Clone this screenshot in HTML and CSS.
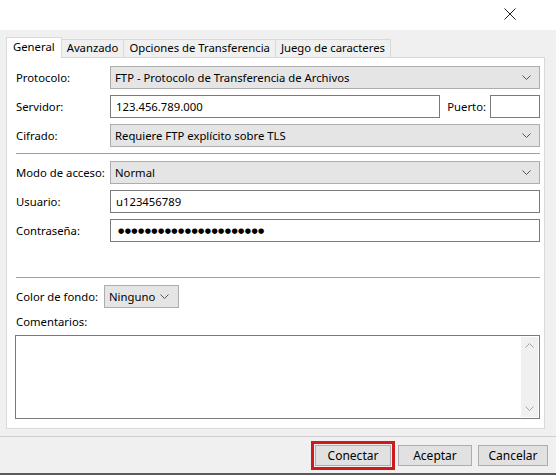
FILE: index.html
```html
<!DOCTYPE html>
<html lang="es">
<head>
<meta charset="utf-8">
<title>Gestor de sitios</title>
<link rel="stylesheet" href="styles.css">
</head>
<body>
<div class="titlebar">
  <svg class="close" width="12" height="12" viewBox="0 0 12 12"><path d="M0.5 0.5L11.5 11.5M11.5 0.5L0.5 11.5" stroke="#222" stroke-width="1" fill="none"/></svg>
</div>
<div class="dialog">
  <div class="tabs">
    <div class="tab active">General</div>
    <div class="tab">Avanzado</div>
    <div class="tab">Opciones de Transferencia</div>
    <div class="tab">Juego de caracteres</div>
  </div>
  <div class="panel">
    <div class="row">
      <span class="label">Protocolo:</span>
      <div class="select grow"><span>FTP - Protocolo de Transferencia de Archivos</span><svg class="chev" width="9" height="5" viewBox="0 0 9 5"><path d="M0.5 0.5L4.5 4.5L8.5 0.5" stroke="#555" fill="none"/></svg></div>
    </div>
    <div class="row">
      <span class="label">Servidor:</span>
      <div class="input server">123.456.789.000</div>
      <span class="port-label">Puerto:</span>
      <div class="input port"></div>
    </div>
    <div class="row">
      <span class="label">Cifrado:</span>
      <div class="select grow"><span>Requiere FTP explícito sobre TLS</span><svg class="chev" width="9" height="5" viewBox="0 0 9 5"><path d="M0.5 0.5L4.5 4.5L8.5 0.5" stroke="#555" fill="none"/></svg></div>
    </div>
    <div class="sep"></div>
    <div class="row">
      <span class="label">Modo de acceso:</span>
      <div class="select grow"><span>Normal</span><svg class="chev" width="9" height="5" viewBox="0 0 9 5"><path d="M0.5 0.5L4.5 4.5L8.5 0.5" stroke="#555" fill="none"/></svg></div>
    </div>
    <div class="row">
      <span class="label">Usuario:</span>
      <div class="input grow">u123456789</div>
    </div>
    <div class="row">
      <span class="label">Contraseña:</span>
      <div class="input grow"><span class="dots">●●●●●●●●●●●●●●●●●●●●●●</span></div>
    </div>
    <div class="sep sep2"></div>
    <div class="row">
      <span class="label short">Color de fondo:</span>
      <div class="select color"><span>Ninguno</span><svg class="chev" width="9" height="5" viewBox="0 0 9 5"><path d="M0.5 0.5L4.5 4.5L8.5 0.5" stroke="#555" fill="none"/></svg></div>
    </div>
    <div class="comments-label">Comentarios:</div>
    <div class="textarea">
      <div class="scrollbar">
        <svg width="9" height="5" viewBox="0 0 9 5"><path d="M0.5 4.5L4.5 0.5L8.5 4.5" stroke="#a6a6a6" fill="none"/></svg>
        <svg width="9" height="5" viewBox="0 0 9 5"><path d="M0.5 0.5L4.5 4.5L8.5 0.5" stroke="#a6a6a6" fill="none"/></svg>
      </div>
    </div>
  </div>
</div>
<div class="footer">
  <button class="btn connect">Conectar</button>
  <button class="btn accept">Aceptar</button>
  <button class="btn cancel">Cancelar</button>
</div>
</body>
</html>
```

FILE: styles.css
```css
* { box-sizing: border-box; }
html, body { margin: 0; padding: 0; }
body {
  width: 556px;
  height: 475px;
  overflow: hidden;
  background: #f0f0f0;
  font-family: "Noto Sans", "Open Sans", sans-serif;
  font-size: 11.3px;
  color: #000;
}
.titlebar {
  height: 30px;
  background: #fff;
  display: flex;
  justify-content: flex-end;
  align-items: flex-start;
  padding: 8px 40px 0 0;
}
.dialog {
  padding: 6px 0 0 6px;
  height: 407px;
  border-bottom: 1px solid #d0d0d0;
}
.tabs {
  display: flex;
  align-items: flex-end;
  height: 21px;
  position: relative;
  z-index: 1;
}
.tab {
  height: 18px;
  border: 1px solid #d9d9d9;
  border-bottom: none;
  border-left: none;
  background: #f0f0f0;
  padding: 0 5px;
  line-height: 16px;
  white-space: nowrap;
}
.tab.active {
  height: 21px;
  background: #fff;
  border-left: 1px solid #d9d9d9;
  padding: 0 6px;
  line-height: 17px;
  margin-bottom: -1px;
}
.panel {
  width: 539px;
  height: 372px;
  background: #fff;
  border: 1px solid #d9d9d9;
  padding: 8px 4px 0 9px;
}
.row {
  display: flex;
  align-items: center;
  height: 23px;
  margin-bottom: 6px;
}
.label {
  width: 94px;
  flex: none;
  white-space: nowrap;
}
.label.short { width: 88px; }
.grow { flex: 1; }
.select {
  height: 23px;
  background: #e5e5e5;
  border: 1px solid #adadad;
  display: flex;
  align-items: center;
  justify-content: space-between;
  padding: 0 8px 0 4px;
  white-space: nowrap;
}
.chev { flex: none; }
.select.color { width: 75px; padding-right: 9px; }
.input {
  height: 23px;
  background: #fff;
  border: 1px solid #7a7a7a;
  display: flex;
  align-items: center;
  padding: 0 5px;
  white-space: nowrap;
}
.input.server { width: 331px; }
.port-label { margin-left: 7px; width: 43px; }
.input.port { width: 50px; }
.dots {
  font-size: 7.2px;
  letter-spacing: 0.4px;
  font-family: "DejaVu Sans", sans-serif;
  padding-left: 2px;
}
.sep {
  height: 1px;
  background: #a0a0a0;
  margin: 0 0 7px 0;
}
.sep2 { margin-top: 35px; }
.comments-label {
  height: 16px;
  line-height: 16px;
  margin: 0 0 5px 0;
}
.textarea {
  height: 84px;
  border: 1px solid #7a7a7a;
  background: #fff;
  display: flex;
  justify-content: flex-end;
  padding: 1px;
  margin-left: -1px;
}
.scrollbar {
  width: 17px;
  background: #f0f0f0;
  display: flex;
  flex-direction: column;
  justify-content: space-between;
  align-items: center;
  padding: 6px 0 6px 0;
}
.footer {
  display: flex;
  justify-content: flex-end;
  align-items: flex-start;
  padding: 8px 8px 0 0;
  height: 38px;
  border-bottom: 2px solid #5a5a5a;
}
.btn {
  font: inherit;
  font-size: 12px;
  height: 21px;
  background: #e1e1e1;
  border: 1px solid #adadad;
  color: #000;
  padding: 0;
  margin: 0;
}
.connect {
  width: 76px;
  outline: 3px solid #d0191c;
  outline-offset: 1px;
  border-radius: 0;
}
.accept { width: 74px; margin-left: 7px; }
.cancel { width: 70px; margin-left: 6px; }
```
